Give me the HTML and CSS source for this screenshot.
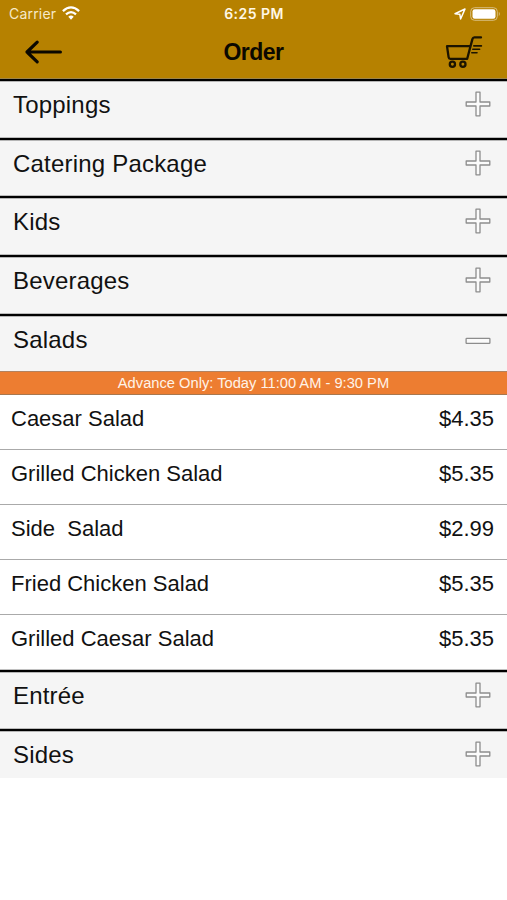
FILE: index.html
```html
<!DOCTYPE html>
<html lang="en">
<head>
<meta charset="utf-8">
<title>Order</title>
<link rel="stylesheet" href="styles.css">
</head>
<body>
<svg class="defs" aria-hidden="true">
  <symbol id="plus" viewBox="0 0 26 26"><path d="M11 1.2h4v9.8h9.8v4H15v9.8h-4V15H1.2v-4H11z" fill="#fbfbfb" stroke="#8d8d8d" stroke-width="1.3" stroke-linejoin="round"/></symbol>
  <symbol id="minus" viewBox="0 0 26 26"><rect x="1.1" y="12.4" width="23.8" height="5" rx=".6" fill="#fbfbfb" stroke="#8d8d8d" stroke-width="1.3"/></symbol>
</svg>
<header class="header">
  <div class="status">
    <div class="carrier"><span>Carrier</span>
      <svg width="18" height="14" viewBox="0 0 18 14" fill="none" stroke="#fff" stroke-width="2.3"><path d="M.9 5.2Q9-2.4 17.1 5.2"/><path d="M4 8.4Q9 3.8 14 8.4"/><path d="M6.3 10.8Q9 8.3 11.7 10.8L9 13.7z" fill="#fff" stroke="none"/></svg>
    </div>
    <span class="time">6:25 PM</span>
    <div class="power">
      <svg width="12" height="12" viewBox="0 0 12 12" fill="none" stroke="#fff" stroke-width="1.5" stroke-linejoin="round"><path d="M1 5.7 11 1 6.6 11 5.8 6.2z"/></svg>
      <svg width="31" height="14" viewBox="0 0 31 14"><rect x=".7" y=".7" width="26.6" height="12.6" rx="3.8" fill="none" stroke="#d8bd7e" stroke-width="1"/><rect x="2.5" y="2.3" width="23" height="9.4" rx="2.2" fill="#fff"/><path d="M28.8 4.8q2 2.2 0 4.4z" fill="#d8bd7e"/></svg>
    </div>
  </div>
  <nav class="nav">
    <svg class="back" width="40" height="26" viewBox="0 0 40 26" fill="none" stroke="#0b0800" stroke-width="3.2" stroke-linecap="round" stroke-linejoin="round"><path d="M37.4 13H4M14.2 3.2 4 13l10.2 9.8"/></svg>
    <h1 class="title">Order</h1>
    <svg class="cart" width="40" height="34" viewBox="0 0 40 34" fill="none" stroke="#1c1400" stroke-width="2.3" stroke-linecap="round" stroke-linejoin="round"><path d="M37 2.4h-6.6q-1.5 0-2 1.7L23.2 23.8H6.3q-1.5 0-1.7-1.6L3 11.2h23.3"/><circle cx="8.4" cy="29.2" r="2.6"/><circle cx="18.9" cy="29.2" r="2.6"/><path d="M29.8 10.9h7.6M28.8 14.3h6.8M27.8 17.7h5.2" stroke-width="1.6"/></svg>
  </nav>
</header>
<main>
  <section class="category"><h2>Toppings</h2><svg class="toggle"><use href="#plus"/></svg></section>
  <section class="category"><h2>Catering Package</h2><svg class="toggle"><use href="#plus"/></svg></section>
  <section class="category"><h2>Kids</h2><svg class="toggle"><use href="#plus"/></svg></section>
  <section class="category"><h2>Beverages</h2><svg class="toggle"><use href="#plus"/></svg></section>
  <section class="category open"><h2>Salads</h2><svg class="toggle"><use href="#minus"/></svg></section>
  <p class="notice">Advance Only: Today 11:00 AM - 9:30 PM</p>
  <ul class="items">
    <li><span>Caesar Salad</span><span>$4.35</span></li>
    <li><span>Grilled Chicken Salad</span><span>$5.35</span></li>
    <li><span>Side&nbsp; Salad</span><span>$2.99</span></li>
    <li><span>Fried Chicken Salad</span><span>$5.35</span></li>
    <li><span>Grilled Caesar Salad</span><span>$5.35</span></li>
  </ul>
  <section class="category"><h2>Entrée</h2><svg class="toggle"><use href="#plus"/></svg></section>
  <section class="category last"><h2>Sides</h2><svg class="toggle"><use href="#plus"/></svg></section>
</main>
</body>
</html>
```
FILE: styles.css
```css
* { box-sizing: border-box; }
body { margin: 0; background: #fff; color: #111; font-family: "Liberation Sans", Arial, sans-serif; }
h1, h2, p, ul { margin: 0; padding: 0; font-weight: normal; }
svg { display: block; flex: none; }
.defs { width: 0; height: 0; position: absolute; }
.header { height: 79px; background: #b68100; }
.status { height: 28px; padding: 0 6px 0 9px; display: grid; grid-template-columns: 1fr auto 1fr; align-items: center; color: #fff8e6; font: 14px/28px Inter, sans-serif; }
.carrier, .power { display: flex; align-items: center; }
.carrier { gap: 6px; color: #f7e9c8; letter-spacing: .2px; }
.carrier svg { margin-top: -2px; }
.time { font-weight: 600; letter-spacing: .45px; margin: 0 1px 0 -1px; }
.power { justify-content: flex-end; gap: 4px; margin-top: -1px; }
.nav { height: 51px; padding: 0 23px; display: grid; grid-template-columns: 1fr auto 1fr; align-items: start; }
.back { margin-top: 11px; }
.title { padding-top: 10px; font-size: 23px; letter-spacing: -.5px; line-height: 28px; font-weight: bold; color: #0b0800; }
.cart { margin-top: 7px; justify-self: end; }
.category { height: 58.67px; border-top: 2px solid #000; box-shadow: inset 0 1px #b5b5b5, 0 -1px #8888; background: #f5f5f5; padding: 9px 16px 0 13px; display: flex; justify-content: space-between; position: relative; }
.category h2 { font-size: 24px; line-height: 30px; letter-spacing: .2px; }
.toggle { width: 26px; height: 26px; margin-top: 1px; }
.open { height: 57px; }
.last { height: 48.5px; }
.notice { height: 24px; border-top: 1px solid #b3825f; border-bottom: 1px solid #a8774f; background: #ed7d31; color: #fff3e8; text-align: center; font-size: 14.7px; line-height: 22px; }
.items { list-style: none; }
.items li { height: 55.1px; padding: 10px 13px 0 11px; border-bottom: 1px solid #aaa; display: flex; justify-content: space-between; font-size: 22px; line-height: 28px; }
.items li:last-child { border-bottom: 0; height: 55.4px; }
```
